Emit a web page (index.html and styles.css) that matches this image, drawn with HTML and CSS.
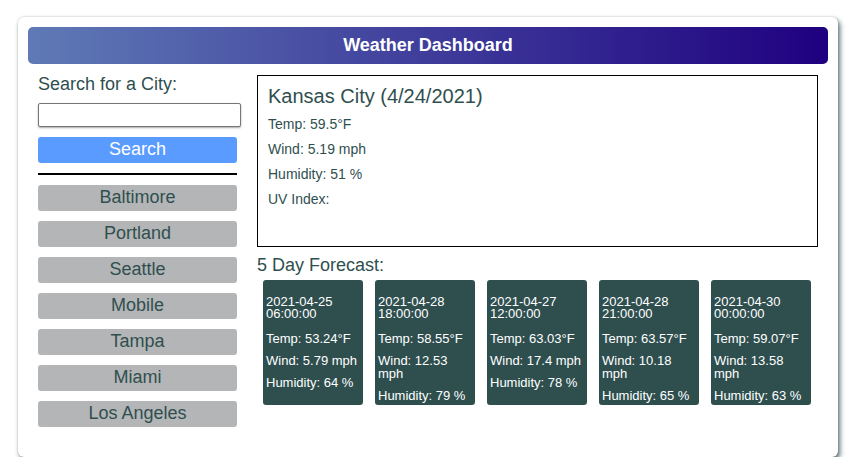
FILE: index.html
```html
<!DOCTYPE html>
<html>
<head>
<meta charset="utf-8">
<title>Weather Dashboard</title>
<link rel="stylesheet" href="styles.css">
</head>
<body>
<div class="card">
  <header class="header">Weather Dashboard</header>
  <div class="main">
    <aside class="sidebar">
      <label class="search-label" for="city">Search for a City:</label>
      <input class="search-input" id="city" type="text">
      <button class="search-btn">Search</button>
      <hr class="divider">
      <button class="city-btn">Baltimore</button>
      <button class="city-btn">Portland</button>
      <button class="city-btn">Seattle</button>
      <button class="city-btn">Mobile</button>
      <button class="city-btn">Tampa</button>
      <button class="city-btn">Miami</button>
      <button class="city-btn">Los Angeles</button>
    </aside>
    <section class="content">
      <div class="current">
        <h2 class="current-title">Kansas City (4/24/2021)</h2>
        <p class="current-line">Temp: 59.5°F</p>
        <p class="current-line">Wind: 5.19 mph</p>
        <p class="current-line">Humidity: 51 %</p>
        <p class="current-line">UV Index:</p>
      </div>
      <h3 class="forecast-title">5 Day Forecast:</h3>
      <div class="forecast">
        <div class="day">
          <p class="day-date">2021-04-25 06:00:00</p>
          <p class="day-line">Temp: 53.24°F</p>
          <p class="day-line">Wind: 5.79 mph</p>
          <p class="day-line">Humidity: 64 %</p>
        </div>
        <div class="day">
          <p class="day-date">2021-04-28 18:00:00</p>
          <p class="day-line">Temp: 58.55°F</p>
          <p class="day-line">Wind: 12.53 mph</p>
          <p class="day-line">Humidity: 79 %</p>
        </div>
        <div class="day">
          <p class="day-date">2021-04-27 12:00:00</p>
          <p class="day-line">Temp: 63.03°F</p>
          <p class="day-line">Wind: 17.4 mph</p>
          <p class="day-line">Humidity: 78 %</p>
        </div>
        <div class="day">
          <p class="day-date">2021-04-28 21:00:00</p>
          <p class="day-line">Temp: 63.57°F</p>
          <p class="day-line">Wind: 10.18 mph</p>
          <p class="day-line">Humidity: 65 %</p>
        </div>
        <div class="day">
          <p class="day-date">2021-04-30 00:00:00</p>
          <p class="day-line">Temp: 59.07°F</p>
          <p class="day-line">Wind: 13.58 mph</p>
          <p class="day-line">Humidity: 63 %</p>
        </div>
      </div>
    </section>
  </div>
</div>
</body>
</html>
```
FILE: styles.css
```css
html, body {
  margin: 0;
  padding: 0;
  background: #ffffff;
}
body {
  font-family: "Liberation Sans", Arial, sans-serif;
  color: #2f4f4f;
}
.card {
  box-sizing: border-box;
  width: 820px;
  margin: 17px 0 0 18px;
  padding: 10px 10px 30px;
  background: #ffffff;
  border-radius: 6px;
  box-shadow: 2px 3px 5px rgba(47, 79, 79, 0.8), 0 0 2px rgba(0, 0, 0, 0.2);
}
.header {
  height: 37px;
  line-height: 37px;
  border-radius: 5px;
  background: linear-gradient(to right, #5f7ab6, #1f0080);
  color: #ffffff;
  font-weight: bold;
  font-size: 18px;
  text-align: center;
}
.main {
  display: flex;
  margin-top: 11px;
}
.sidebar {
  width: 199px;
  padding: 0 10px;
  display: flex;
  flex-direction: column;
  align-items: flex-start;
}
.search-label {
  font-size: 18px;
  line-height: 18px;
  margin-bottom: 10px;
}
.search-input {
  box-sizing: border-box;
  width: 203px;
  height: 24px;
  margin: 0 0 10px;
  border: 1px solid #767676;
  border-radius: 2px;
  box-shadow: 0 1px 2px rgba(0, 0, 0, 0.35);
  font-family: inherit;
  font-size: 16px;
}
.search-btn,
.city-btn {
  box-sizing: border-box;
  width: 199px;
  height: 26px;
  padding: 0 0 2px;
  border: none;
  border-radius: 3px;
  font-family: inherit;
  font-size: 18px;
  line-height: 22px;
  text-align: center;
}
.search-btn {
  background: #5a9bff;
  color: #ffffff;
}
.divider {
  box-sizing: border-box;
  width: 199px;
  height: 2px;
  margin: 10px 0;
  border: none;
  background: #000000;
}
.city-btn {
  background: #b4b5b7;
  color: #2f4f4f;
  margin-bottom: 10px;
}
.city-btn:last-child {
  margin-bottom: 0;
}
.content {
  flex: 1;
  padding: 0 10px;
}
.current {
  box-sizing: border-box;
  height: 172px;
  border: 1px solid #000000;
  padding: 8px 10px;
}
.current-title {
  margin: 0 0 8px;
  font-size: 20px;
  line-height: 24px;
  font-weight: normal;
}
.current-line {
  margin: 0 0 9px;
  font-size: 14px;
  line-height: 16px;
}
.forecast-title {
  margin: 8px 0 5px;
  font-size: 18px;
  line-height: 20px;
  font-weight: normal;
}
.forecast {
  display: flex;
  align-items: stretch;
}
.day {
  box-sizing: border-box;
  width: 100px;
  margin: 0 6px;
  padding: 3px 3px 3px;
  border-radius: 3px;
  background: #2f4f4f;
  color: #ffffff;
  font-size: 13px;
}
.day-date {
  margin: 13px 0 12px;
  line-height: 12px;
}
.day-line {
  margin: 0 0 9px;
  line-height: 13px;
}
.day-line:last-child {
  margin-bottom: 0;
}
```
